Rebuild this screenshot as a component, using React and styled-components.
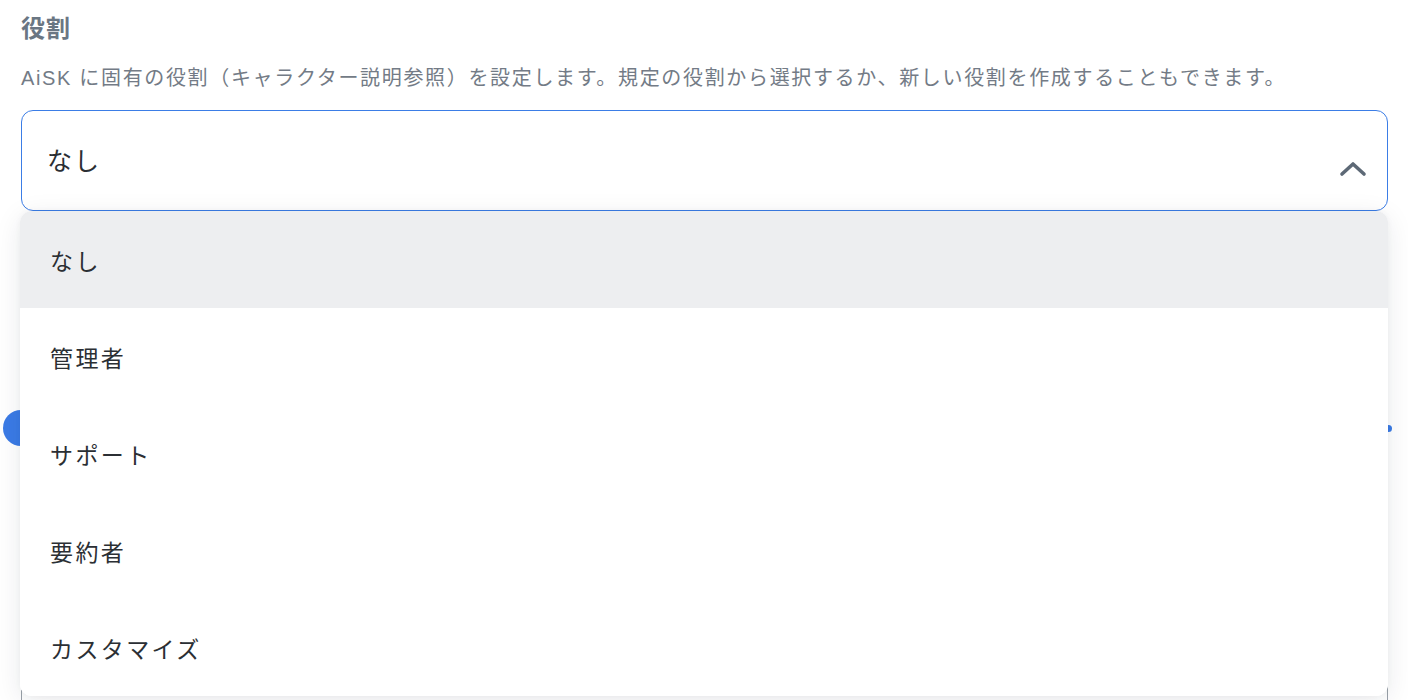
import React, { useState } from 'react';
import styled, { createGlobalStyle } from 'styled-components';

const roles = ['なし', '管理者', 'サポート', '要約者', 'カスタマイズ'];

const GlobalStyle = createGlobalStyle`
  html, body {
    margin: 0;
    padding: 0;
    background: #ffffff;
    overflow: hidden;
  }
  body {
    font-family: 'Liberation Sans', 'Noto Sans CJK JP', sans-serif;
  }
`;

const Chevron = ({ up }) => (
  <svg width="28" height="18" viewBox="0 0 28 18" fill="none">
    <path
      d={up ? 'M3 15 L14 5 L25 15' : 'M3 4 L14 14 L25 4'}
      stroke="#5d6976"
      strokeWidth="3.6"
      strokeLinecap="round"
      strokeLinejoin="round"
    />
  </svg>
);

const App = () => {
  const [selected, setSelected] = useState('なし');
  const [open, setOpen] = useState(true);

  return (
    <>
      <GlobalStyle />
      <Page>
        <Title>役割</Title>
        <Description>
          AiSK に固有の役割（キャラクター説明参照）を設定します。規定の役割から選択するか、新しい役割を作成することもできます。
        </Description>

        <SelectWrap>
          <SelectBox $active={open} onClick={() => setOpen(!open)}>
            <SelectValue>{selected}</SelectValue>
            <ChevronSlot>
              <Chevron up={open} />
            </ChevronSlot>
          </SelectBox>

          {open && (
            <Menu>
              {roles.map((role) => (
                <MenuItem
                  key={role}
                  $selected={role === selected}
                  onClick={() => {
                    setSelected(role);
                    setOpen(false);
                  }}
                >
                  {role}
                </MenuItem>
              ))}
            </Menu>
          )}
        </SelectWrap>

        <SliderRow>
          <Track>
            <Thumb />
            <EndDot />
          </Track>
        </SliderRow>

        <SecondSelect>
          <SelectValue>標準</SelectValue>
          <ChevronSlot>
            <Chevron />
          </ChevronSlot>
        </SecondSelect>
      </Page>
    </>
  );
};

export default App;

// Styled Components
const Page = styled.div`
  padding: 14px 20px 0 21px;
  width: 1408px;
  height: 700px;
  box-sizing: border-box;
  overflow: hidden;
`;

const Title = styled.h2`
  margin: 0;
  font-size: 24px;
  line-height: 30px;
  font-weight: 700;
  letter-spacing: 1px;
  color: #6a7683;
`;

const Description = styled.p`
  margin: 19px 0 0;
  font-size: 20px;
  line-height: 30px;
  letter-spacing: 1.66px;
  color: #737b86;
  white-space: nowrap;
`;

const SelectWrap = styled.div`
  position: relative;
  margin-top: 17px;
`;

const SelectBox = styled.div`
  display: flex;
  align-items: center;
  justify-content: space-between;
  height: 101px;
  box-sizing: border-box;
  padding: 0 20px 0 25px;
  border: 1px solid ${(p) => (p.$active ? '#3b7de6' : '#c9ced4')};
  border-radius: 12px;
  background: #fff;
  cursor: pointer;
`;

const SelectValue = styled.span`
  font-size: 25px;
  letter-spacing: 2px;
  color: #2b2f34;
  margin-top: -4px;
`;

const ChevronSlot = styled.span`
  display: flex;
  margin-top: 14px;
`;

const Menu = styled.div`
  position: absolute;
  top: 101px;
  left: -1px;
  right: 0;
  z-index: 10;
  background: #fff;
  border-radius: 12px;
  overflow: hidden;
  box-shadow: 0 6px 28px rgba(20, 30, 50, 0.09), 0 0 6px rgba(20, 30, 50, 0.04);
`;

const MenuItem = styled.div`
  display: flex;
  align-items: center;
  height: 97px;
  padding-left: 30px;
  font-size: 23px;
  letter-spacing: 2.4px;
  color: #2b2f34;
  background: ${(p) => (p.$selected ? '#edeef0' : '#ffffff')};
  cursor: pointer;
`;

const SliderRow = styled.div`
  margin-top: 199px;
  height: 36px;
  display: flex;
  align-items: center;
  padding-left: 1px;
`;

const Track = styled.div`
  position: relative;
  flex: 1;
  height: 6px;
  border-radius: 3px;
  background: #dfe3e8;
`;

const Thumb = styled.div`
  position: absolute;
  left: -19px;
  top: -15px;
  width: 36px;
  height: 36px;
  border-radius: 50%;
  background: #3b7be6;
`;

const EndDot = styled.div`
  position: absolute;
  right: -4px;
  top: -0.5px;
  width: 7px;
  height: 7px;
  border-radius: 50%;
  background: #3b7be6;
`;

const SecondSelect = styled.div`
  display: flex;
  align-items: center;
  justify-content: space-between;
  margin-top: 222px;
  height: 101px;
  box-sizing: border-box;
  padding: 0 20px 0 25px;
  border: 1px solid #9aa1a9;
  border-radius: 12px;
  background: #fff;
`;
